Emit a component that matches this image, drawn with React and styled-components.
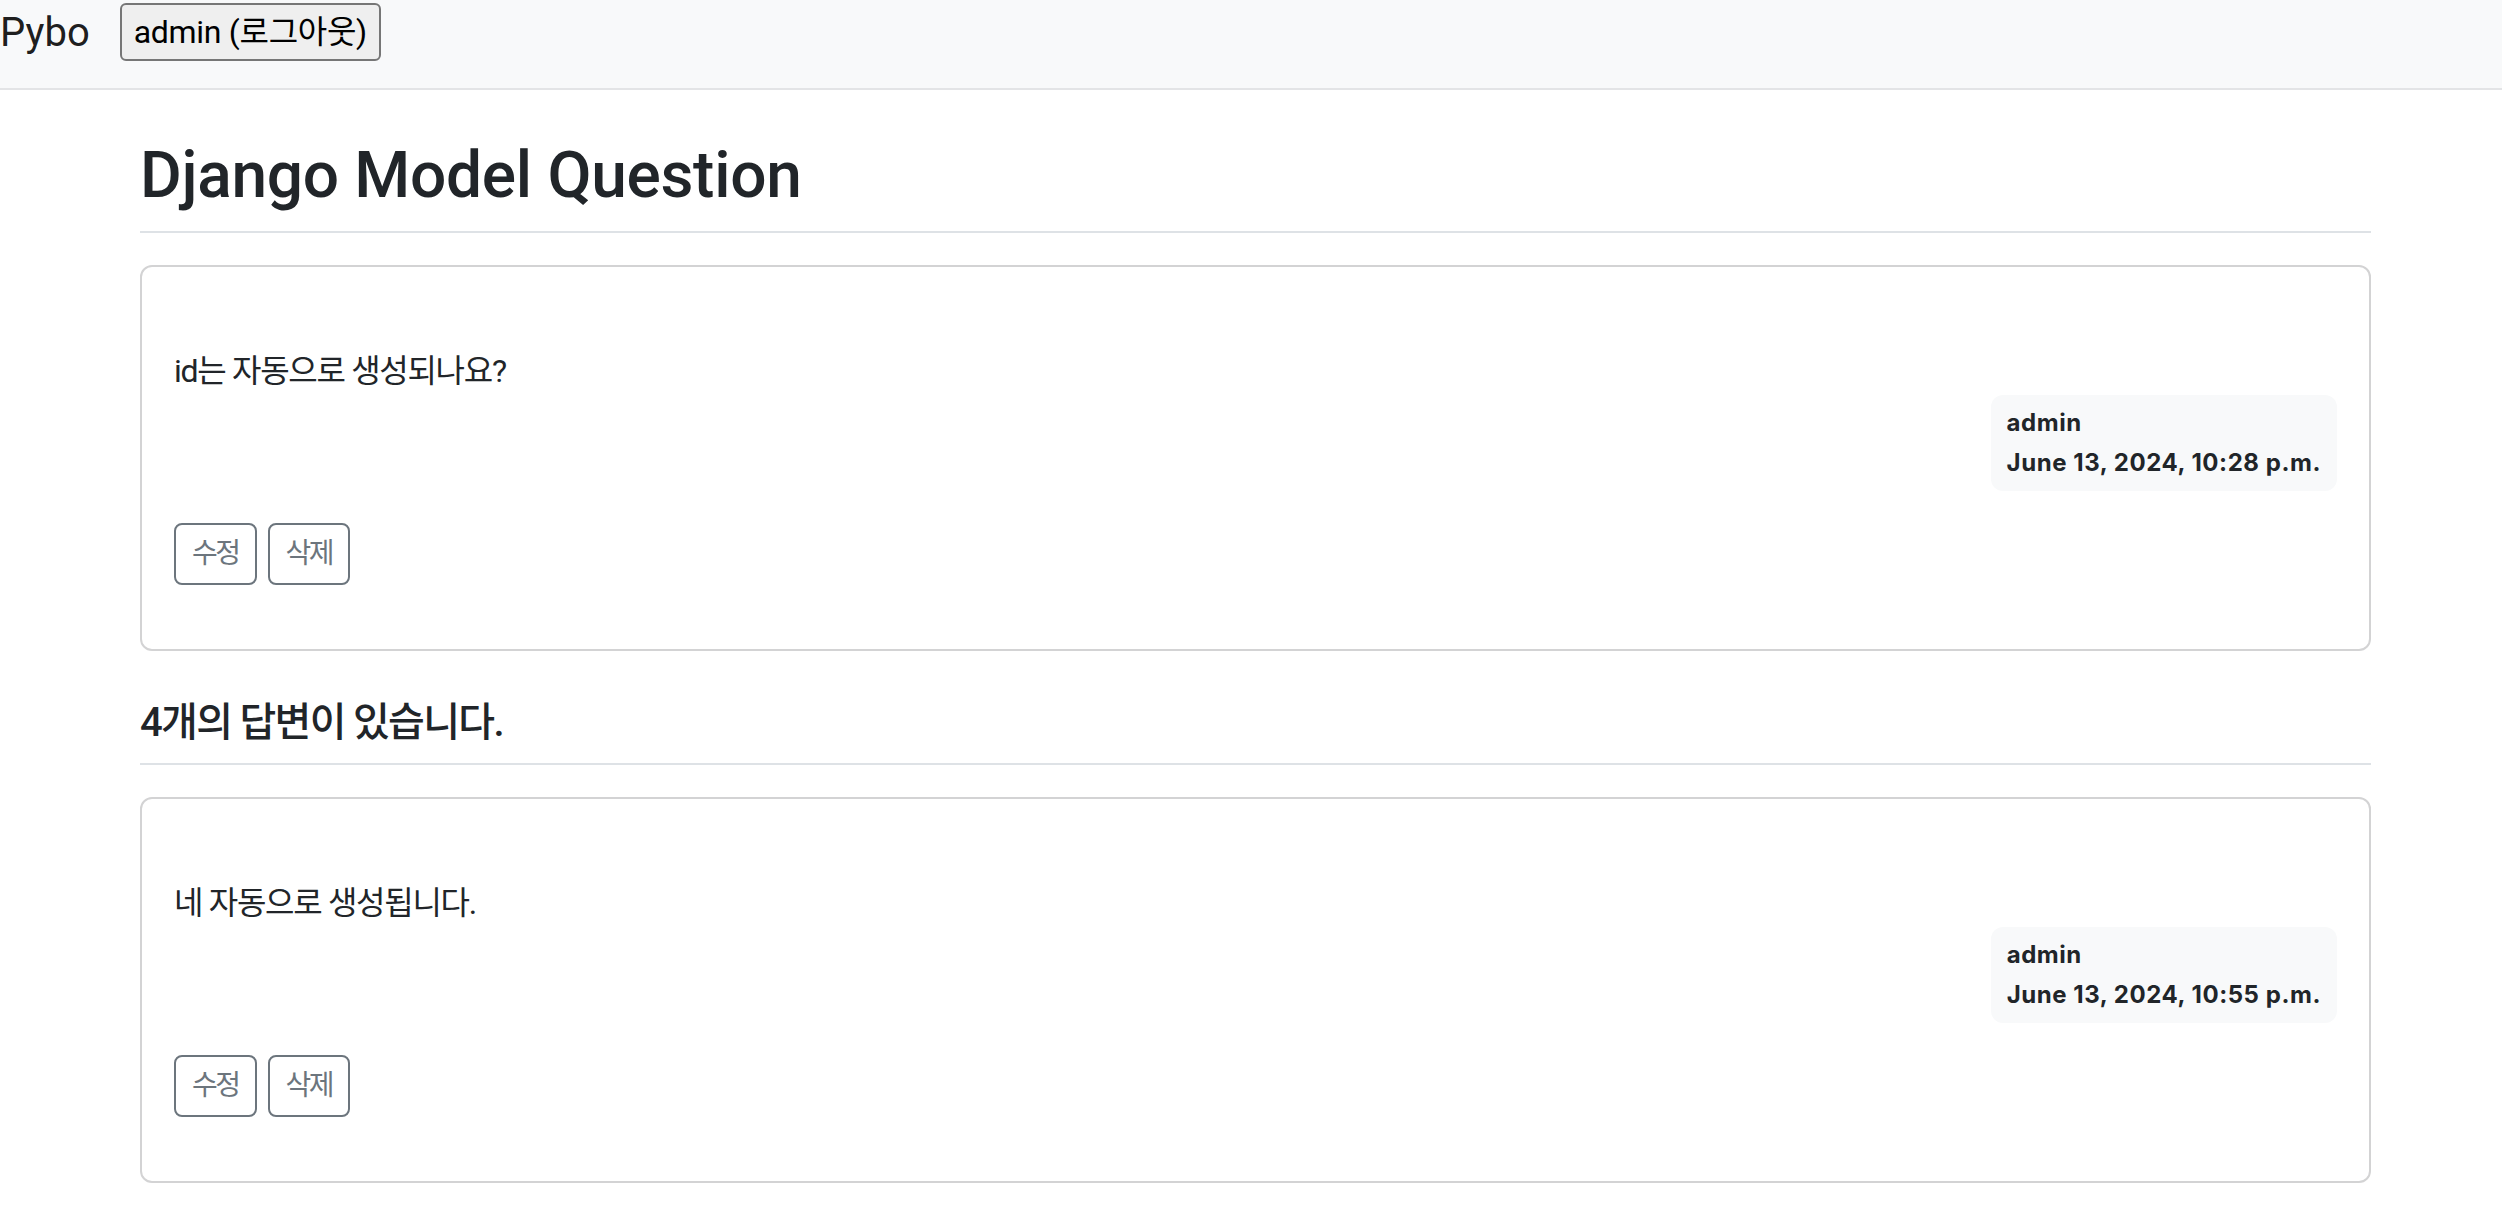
import React from "react";
import styled, { createGlobalStyle } from "styled-components";

const GlobalStyle = createGlobalStyle`
  html, body {
    margin: 0;
    padding: 0;
    background: #ffffff;
  }
  body {
    font-family: Roboto, "Noto Sans CJK KR", sans-serif;
    color: #212529;
    font-size: 32px;
    line-height: 1.5;
  }
  * { box-sizing: border-box; }
`;

const Navbar = styled.nav`
  display: flex;
  align-items: flex-start;
  gap: 30px;
  height: 90px;
  padding-top: 3px;
  background: #f8f9fa;
  border-bottom: 2px solid #e3e4e6;
`;

const Brand = styled.a`
  font-size: 40px;
  line-height: 60px;
  color: rgba(0, 0, 0, 0.9);
  text-decoration: none;
`;

const NavButton = styled.button`
  font-family: Roboto, "Noto Sans CJK KR", sans-serif;
  font-size: 32px;
  line-height: 38px;
  padding: 8px 12px;
  color: #000;
  background: #efefef;
  border: 2px solid #767676;
  border-radius: 6px;
  letter-spacing: -0.3px;
`;

const Container = styled.main`
  width: 2231px;
  margin: 32px 0 0 140px;
  display: flex;
  flex-direction: column;
`;

const Title = styled.h2`
  margin: 0 0 32px;
  padding: 16px 0;
  font-size: 64px;
  font-weight: 500;
  line-height: 1.2;
  letter-spacing: -0.3px;
  border-bottom: 2px solid #dee2e6;
`;

const SectionHeading = styled.h5`
  margin: 0 0 32px;
  padding: 16px 0;
  font-size: 40px;
  font-weight: 500;
  line-height: 1.2;
  border-bottom: 2px solid #dee2e6;
  letter-spacing: -1.7px;
`;

const Card = styled.section`
  border: 2px solid #d3d3d4;
  border-radius: 12px;
  margin-bottom: 32px;
  background: #fff;
`;

const CardBody = styled.div`
  padding: 32px;
  display: flex;
  flex-direction: column;
`;

const CardText = styled.div`
  white-space: pre-line;
  font-size: 32px;
  line-height: 48px;
  letter-spacing: -1.3px;
`;

const MetaRow = styled.div`
  display: flex;
  justify-content: flex-end;
`;

const Badge = styled.div`
  background: #f8f9fa;
  color: #212529;
  border-radius: 12px;
  padding: 16px;
  font-family: Inter, Roboto, sans-serif;
  font-size: 24px;
  font-weight: 700;
  line-height: 1;
  letter-spacing: 0.55px;
  text-align: left;
  display: flex;
  flex-direction: column;
  gap: 16px;
`;

const Actions = styled.div`
  display: flex;
  gap: 11px;
  margin: 32px 0;
`;

const OutlineButton = styled.a`
  display: inline-block;
  padding: 8px 16px;
  font-size: 28px;
  line-height: 42px;
  color: #6c757d;
  border: 2px solid #6c757d;
  border-radius: 8px;
  text-decoration: none;
  letter-spacing: -2.5px;
`;

const Post = ({ content, author, date }) => (
  <Card>
    <CardBody>
      <CardText>{"\n" + content}</CardText>
      <MetaRow>
        <Badge>
          <div>{author}</div>
          <div>{date}</div>
        </Badge>
      </MetaRow>
      <Actions>
        <OutlineButton href="#">수정</OutlineButton>
        <OutlineButton href="#">삭제</OutlineButton>
      </Actions>
    </CardBody>
  </Card>
);

export default function App() {
  return (
    <>
      <GlobalStyle />
      <Navbar>
        <Brand href="#">Pybo</Brand>
        <NavButton>admin (로그아웃)</NavButton>
      </Navbar>
      <Container>
        <Title>Django Model Question</Title>
        <Post
          content="id는 자동으로 생성되나요?"
          author="admin"
          date="June 13, 2024, 10:28 p.m."
        />
        <SectionHeading>4개의 답변이 있습니다.</SectionHeading>
        <Post
          content="네 자동으로 생성됩니다."
          author="admin"
          date="June 13, 2024, 10:55 p.m."
        />
      </Container>
    </>
  );
}
